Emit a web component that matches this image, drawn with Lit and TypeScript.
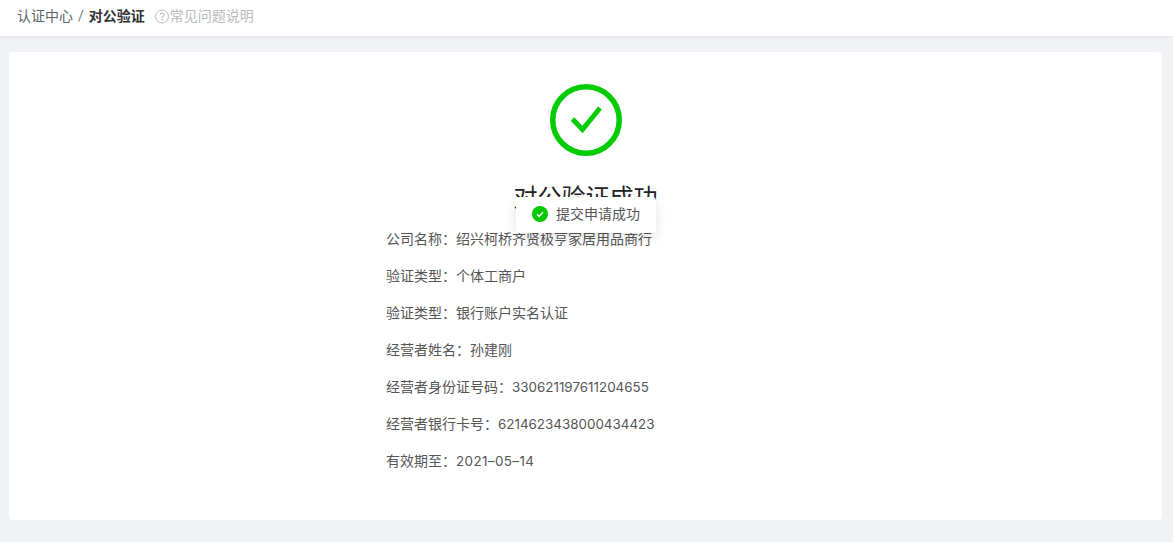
import { LitElement, html, css } from "lit";
import { customElement } from "lit/decorators.js";

const C = "\uFF1A";
const rows: [string, string, string?][] = [
  ["公司名称", "绍兴柯桥齐贤极亨家居用品商行"],
  ["验证类型", "个体工商户"],
  ["验证类型", "银行账户实名认证"],
  ["经营者姓名", "孙建刚"],
  ["经营者身份证号码", "330621197611204655", "num"],
  ["经营者银行卡号", "6214623438000434423", "num"],
  ["有效期至", "2021\u201305\u201314", "num date"],
];

@customElement("app-root")
export class AppRoot extends LitElement {
  static styles = css`
    :host {
      display: block;
      position: relative;
      height: 542px;
      overflow: hidden;
      background: #f0f2f5;
      font-family: Roboto, "Noto Sans CJK SC", sans-serif;
      font-size: 14px;
      color: #555;
    }
    .bar {
      height: 36px;
      background: #fff;
      box-shadow: 0 1px 4px rgba(0, 21, 41, 0.08);
      display: flex;
      align-items: center;
      padding-left: 17px;
      line-height: 32px;
    }
    .bar > div { margin-top: -4px; display: flex; align-items: center; }
    .crumb { color: #606266; }
    .sep { margin: 0 5px; color: #777; }
    .cur { color: #303133; font-weight: 700; }
    .help {
      margin-left: 10px;
      color: #bbb;
      display: flex;
      align-items: center;
    }
    .help svg { width: 15px; height: 15px; display: block; }
    .card {
      margin: 16px 11px 0 9px;
      height: 468px;
      box-sizing: border-box;
      background: #fff;
      border-radius: 4px;
      padding-top: 32px;
      display: flex;
      flex-direction: column;
      align-items: center;
    }
    .big { width: 72px; height: 72px; display: block; }
    .title {
      margin-top: 25px;
      font-size: 24px;
      line-height: 34px;
      color: #222;
    }
    .list {
      align-self: flex-start;
      margin: 14px 0 0 377px;
      line-height: 21px;
      display: flex;
      flex-direction: column;
      gap: 16px;
      white-space: nowrap;
    }
    .num { font-family: Inter, sans-serif; font-size: 13.4px; }
    .date { letter-spacing: 0.4px; }
    .toast {
      position: absolute;
      left: 516px;
      top: 197px;
      width: 140px;
      height: 36px;
      box-sizing: border-box;
      background: #fff;
      border-radius: 4px;
      box-shadow: 0 4px 12px rgba(0, 0, 0, 0.12);
      display: flex;
      align-items: center;
      padding: 0 0 2px 16px;
      gap: 8px;
      color: #555;
      line-height: 20px;
    }
    .toast svg { width: 16px; height: 16px; display: block; }
  `;

  render() {
    return html`
      <div class="bar">
        <div>
          <span class="crumb">认证中心</span><span class="sep">/</span><span class="cur">对公验证</span>
          <span class="help">
            <svg viewBox="0 0 15 15" fill="none" stroke="#bbb">
              <circle cx="7" cy="7.500" r="6.500" />
              <path d="M5 6a2 2 0 1 1 3 1.700c-.7.4-1 .8-1 1.500" stroke-width="1.100" />
              <circle cx="7" cy="10.900" r=".4" />
            </svg>常见问题说明
          </span>
        </div>
      </div>
      <div class="card">
        <svg class="big" viewBox="0 0 72 72" fill="none">
          <circle cx="36" cy="36" r="33.250" stroke="#00cc00" stroke-width="5.500" />
          <path d="M22.500 35L32.500 45.500L50 24" stroke="#00cc00" stroke-width="4.800" />
        </svg>
        <div class="title">对公验证成功</div>
        <div class="list">
          ${rows.map(
            ([k, v, n]) => html`<div>${k}${C}<span class=${n ?? ""}>${v}</span></div>`,
          )}
        </div>
      </div>
      <div class="toast">
        <svg viewBox="0 0 16 16">
          <circle cx="8" cy="8" r="8" fill="#00c800" />
          <path d="M5 8.200l2.200 2.300L11 6" fill="none" stroke="#fff" stroke-width="1.400" />
        </svg>
        <span>提交申请成功</span>
      </div>
    `;
  }
}
